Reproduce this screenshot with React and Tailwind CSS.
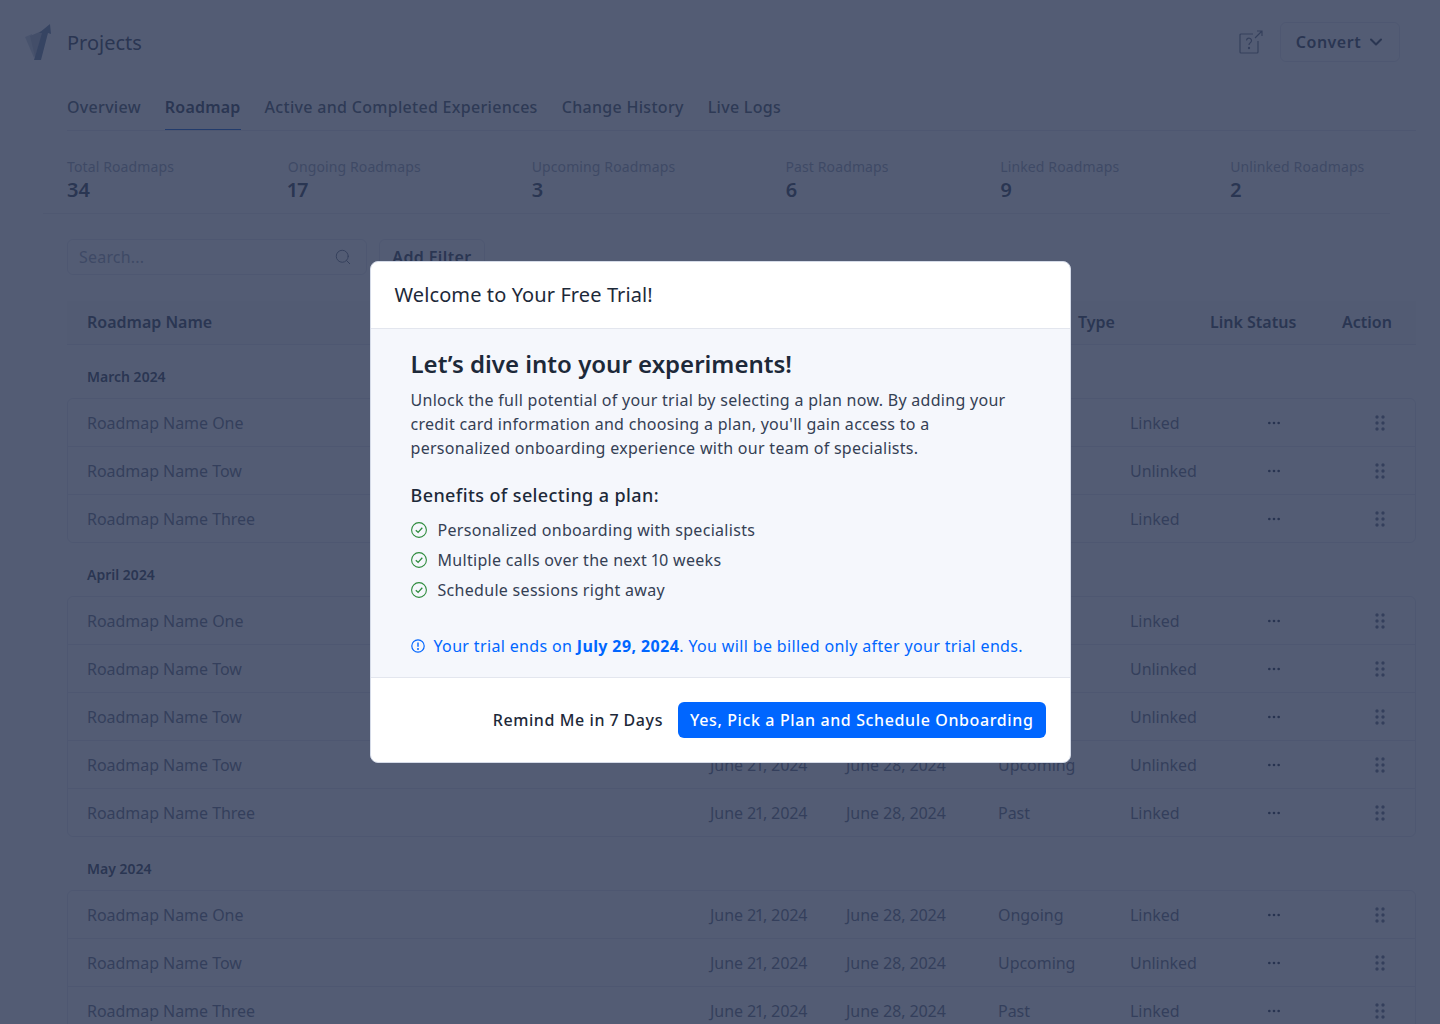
import { ChevronDown, Search, Ellipsis } from 'lucide-react';

const stats = [
  { label: 'Total Roadmaps', value: '34', width: 'w-[221px]' },
  { label: 'Ongoing Roadmaps', value: '17', width: 'w-[244px]' },
  { label: 'Upcoming Roadmaps', value: '3', width: 'w-[254px]' },
  { label: 'Past Roadmaps', value: '6', width: 'w-[215px]' },
  { label: 'Linked Roadmaps', value: '9', width: 'w-[230px]' },
  { label: 'Unlinked Roadmaps', value: '2', width: 'w-[160px]' },
];

const tabs = ['Overview', 'Roadmap', 'Active and Completed Experiences', 'Change History', 'Live Logs'];

const groups = [
  {
    month: 'March 2024',
    rows: [
      ['Roadmap Name One', 'Ongoing', 'Linked'],
      ['Roadmap Name Tow', 'Ongoing', 'Unlinked'],
      ['Roadmap Name Three', 'Past', 'Linked'],
    ],
  },
  {
    month: 'April 2024',
    rows: [
      ['Roadmap Name One', 'Past', 'Linked'],
      ['Roadmap Name Tow', 'Ongoing', 'Unlinked'],
      ['Roadmap Name Tow', 'Ongoing', 'Unlinked'],
      ['Roadmap Name Tow', 'Upcoming', 'Unlinked'],
      ['Roadmap Name Three', 'Past', 'Linked'],
    ],
  },
  {
    month: 'May 2024',
    rows: [
      ['Roadmap Name One', 'Ongoing', 'Linked'],
      ['Roadmap Name Tow', 'Upcoming', 'Unlinked'],
      ['Roadmap Name Three', 'Past', 'Linked'],
    ],
  },
];

const benefits = [
  'Personalized onboarding with specialists',
  'Multiple calls over the next 10 weeks',
  'Schedule sessions right away',
];

const Logo = () => (
  <svg width="30" height="40" viewBox="0 0 30 40" fill="none">
    <path d="M1 15 L8 12 L12 33 L10 36 Z" fill="#c9d1dc" />
    <path d="M6 14 L20 8 L11 35 Z" fill="#aeb8c8" />
    <path d="M10 38 L18 11 L15 11 L26 2 L27 12 L24 11 L17 38 Z" fill="#6f86a6" />
  </svg>
);

const HelpIcon = () => (
  <svg width="26" height="26" viewBox="0 0 26 26" fill="none" stroke="#667085" strokeWidth="1.2">
    <path d="M15 5 H3 a1 1 0 0 0 -1 1 V23 a1 1 0 0 0 1 1 H19 a1 1 0 0 0 1 -1 V12" />
    <path d="M17 9 L24 2 M19 2 H24 V7" />
    <path d="M8.5 11.5 a2.5 2.5 0 1 1 3.8 2.2 c-1 .6 -1.3 1.2 -1.3 2.3" />
    <circle cx="11" cy="19" r="0.6" fill="#667085" />
  </svg>
);

const DragDots = () => (
  <svg width="10" height="16" viewBox="0 0 10 16" fill="#667085">
    {[2, 8, 14].map((y) => (
      <g key={y}>
        <circle cx="2" cy={y} r="1.7" />
        <circle cx="8" cy={y} r="1.7" />
      </g>
    ))}
  </svg>
);

const CheckIcon = () => (
  <svg width="16" height="16" viewBox="0 0 16 16" fill="none" stroke="#2e8b3d" strokeWidth="1.1" className="shrink-0">
    <circle cx="8" cy="8" r="7.4" />
    <path d="M4.8 8.2 L7.1 10.4 L11.3 5.8" strokeWidth="1.3" />
  </svg>
);

const InfoIcon = () => (
  <svg width="14" height="14" viewBox="0 0 14 14" fill="none" stroke="#0066ff" strokeWidth="1.2" className="shrink-0">
    <circle cx="7" cy="7" r="6.2" />
    <path d="M7 3.5 V7.8" strokeWidth="1.4" />
    <circle cx="7" cy="10" r="0.4" fill="#0066ff" />
  </svg>
);

const RoadmapRow = ({ name, type, link }) => (
  <div className="grid grid-cols-[623px_136px_152px_132px_136px_1fr] items-center h-12 pl-[19px] border-b border-[#e3e6ee] last:h-[47px] last:border-b-0 text-base tracking-[-0.04px] text-[#667085]">
    <span>{name}</span>
    <span>June 21, 2024</span>
    <span>June 28, 2024</span>
    <span>{type}</span>
    <span>{link}</span>
    <div className="flex items-center">
      <Ellipsis size={16} className="text-[#26324e]" />
      <div className="ml-[93px]">
        <DragDots />
      </div>
    </div>
  </div>
);

const App = () => {
  return (
    <div className="relative h-[1024px] overflow-hidden bg-white font-['Noto_Sans',sans-serif] proportional-nums text-[#101828]">
      <div className="flex items-center justify-between pl-[24px] pr-[40px] pt-[22px]">
        <div className="flex items-center gap-[13px]">
          <Logo />
          <h1 className="mt-[2px] text-[20px] text-[#344054]">Projects</h1>
        </div>
        <div className="flex items-center gap-[16px]">
          <HelpIcon />
          <button className="flex items-center gap-[5px] h-10 w-[120px] pl-[2px] justify-center rounded-md border border-[#e3e6ee] text-base font-semibold tracking-[0.5px] text-[#344054]">
            Convert
            <ChevronDown size={20} strokeWidth={2.5} />
          </button>
        </div>
      </div>

      <div className="ml-[67px] mr-[24px] mt-[23px] flex gap-6 border-b border-[#e3e6ee]">
        {tabs.map((tab) => (
          <div
            key={tab}
            className={`h-[45px] pt-[10px] text-base ${tab === 'Roadmap' ? 'border-b border-[#0a5cd6] font-semibold tracking-[0.2px] text-[#344054]' : 'font-medium tracking-[0.3px] text-[#475467]'}`}
          >
            {tab}
          </div>
        ))}
      </div>

      <div className="ml-[43px] mr-[50px] mt-[26px] flex border-b border-[#e8eaf0] pb-[10px] pl-[24px]">
        {stats.map((stat) => (
          <div key={stat.label} className={stat.width}>
            <div className="text-sm leading-[20px] tracking-[0.12px] text-[#98a2b3]">{stat.label}</div>
            <div className="text-xl font-semibold leading-[26px] text-[#344054]">{stat.value}</div>
          </div>
        ))}
      </div>

      <div className="ml-[67px] mt-[25px] flex gap-3">
        <div className="flex h-[36px] w-[300px] items-center justify-between rounded-md border border-[#e3e6ee] pl-[11px] pr-[14px]">
          <span className="text-base tracking-[0.2px] text-[#98a2b3]">Search...</span>
          <Search size={18} strokeWidth={1.3} className="text-[#667085]" />
        </div>
        <button className="h-[36px] w-[106px] rounded-md border border-[#e3e6ee] text-base font-semibold tracking-[0.4px] text-[#344054]">Add Filter</button>
      </div>

      <div className="ml-[67px] mr-[24px] mt-[26px]">
        <div className="grid h-[44px] grid-cols-[703px_136px_152px_132px_132px_1fr] items-center border-b border-[#e3e6ee] bg-[#f9fafb] pb-[2px] pl-5 text-base font-semibold text-[#344054]">
          <span>Roadmap Name</span>
          <span>Start Date</span>
          <span>End Date</span>
          <span>Type</span>
          <span>Link Status</span>
          <span>Action</span>
        </div>
        {groups.map((group) => (
          <div key={group.month}>
            <div className="flex h-[53px] items-end pb-[11px] pl-5 text-sm font-semibold text-[#344054]">{group.month}</div>
            <div className="rounded-md border border-[#e3e6ee]">
              {group.rows.map((row, i) => (
                <RoadmapRow key={i} name={row[0]} type={row[1]} link={row[2]} />
              ))}
            </div>
          </div>
        ))}
      </div>

      {/* dimmed backdrop + trial modal */}
      <div className="absolute inset-0 flex items-start justify-center bg-[rgba(40,51,81,0.8)] pt-[261px]">
        <div className="w-[701px] overflow-hidden rounded-lg border border-[#d5dbe8] bg-white">
          <div className="flex h-[67px] items-center border-b border-[#e3e6ee] px-6 text-xl tracking-[0.1px] text-[#1d2939]">Welcome to Your Free Trial!</div>
          <div className="h-[349px] border-b border-[#e3e6ee] bg-[#f5f7fc] px-10 pt-[17px]">
            <h2 className="text-2xl font-semibold leading-[36px] text-[#1d2939]">Let’s dive into your experiments!</h2>
            <p className="mt-[6px] text-base leading-6 tracking-[0.29px] text-[#344054]">
              Unlock the full potential of your trial by selecting a plan now. By adding your credit card information and choosing a plan, you'll gain access to a personalized onboarding experience with our team of specialists.
            </p>
            <h3 className="mt-[23px] text-lg font-medium leading-[24px] tracking-[0.4px] text-[#1d2939]">Benefits of selecting a plan:</h3>
            <ul className="mt-[11px] flex flex-col gap-[6px]">
              {benefits.map((item) => (
                <li key={item} className="flex items-center gap-[11px] text-base leading-6 tracking-[0.3px] text-[#344054]">
                  <CheckIcon />
                  {item}
                </li>
              ))}
            </ul>
            <p className="mt-[32px] flex items-center gap-[9px] text-base leading-6 tracking-[0.35px] text-[#0066ff]">
              <InfoIcon />
              <span>
                Your trial ends on <b className="font-bold">July 29, 2024</b>. You will be billed only after your trial ends.
              </span>
            </p>
          </div>
          <div className="flex h-[84px] items-center justify-end gap-[15px] px-6 pb-[1px]">
            <button className="text-base font-medium tracking-[0.6px] text-[#1d2939]">Remind Me in 7 Days</button>
            <button className="h-[36px] rounded-md bg-[#0066ff] px-3 text-base font-medium tracking-[0.62px] text-white">Yes, Pick a Plan and Schedule Onboarding</button>
          </div>
        </div>
      </div>
    </div>
  );
};

export default App;
